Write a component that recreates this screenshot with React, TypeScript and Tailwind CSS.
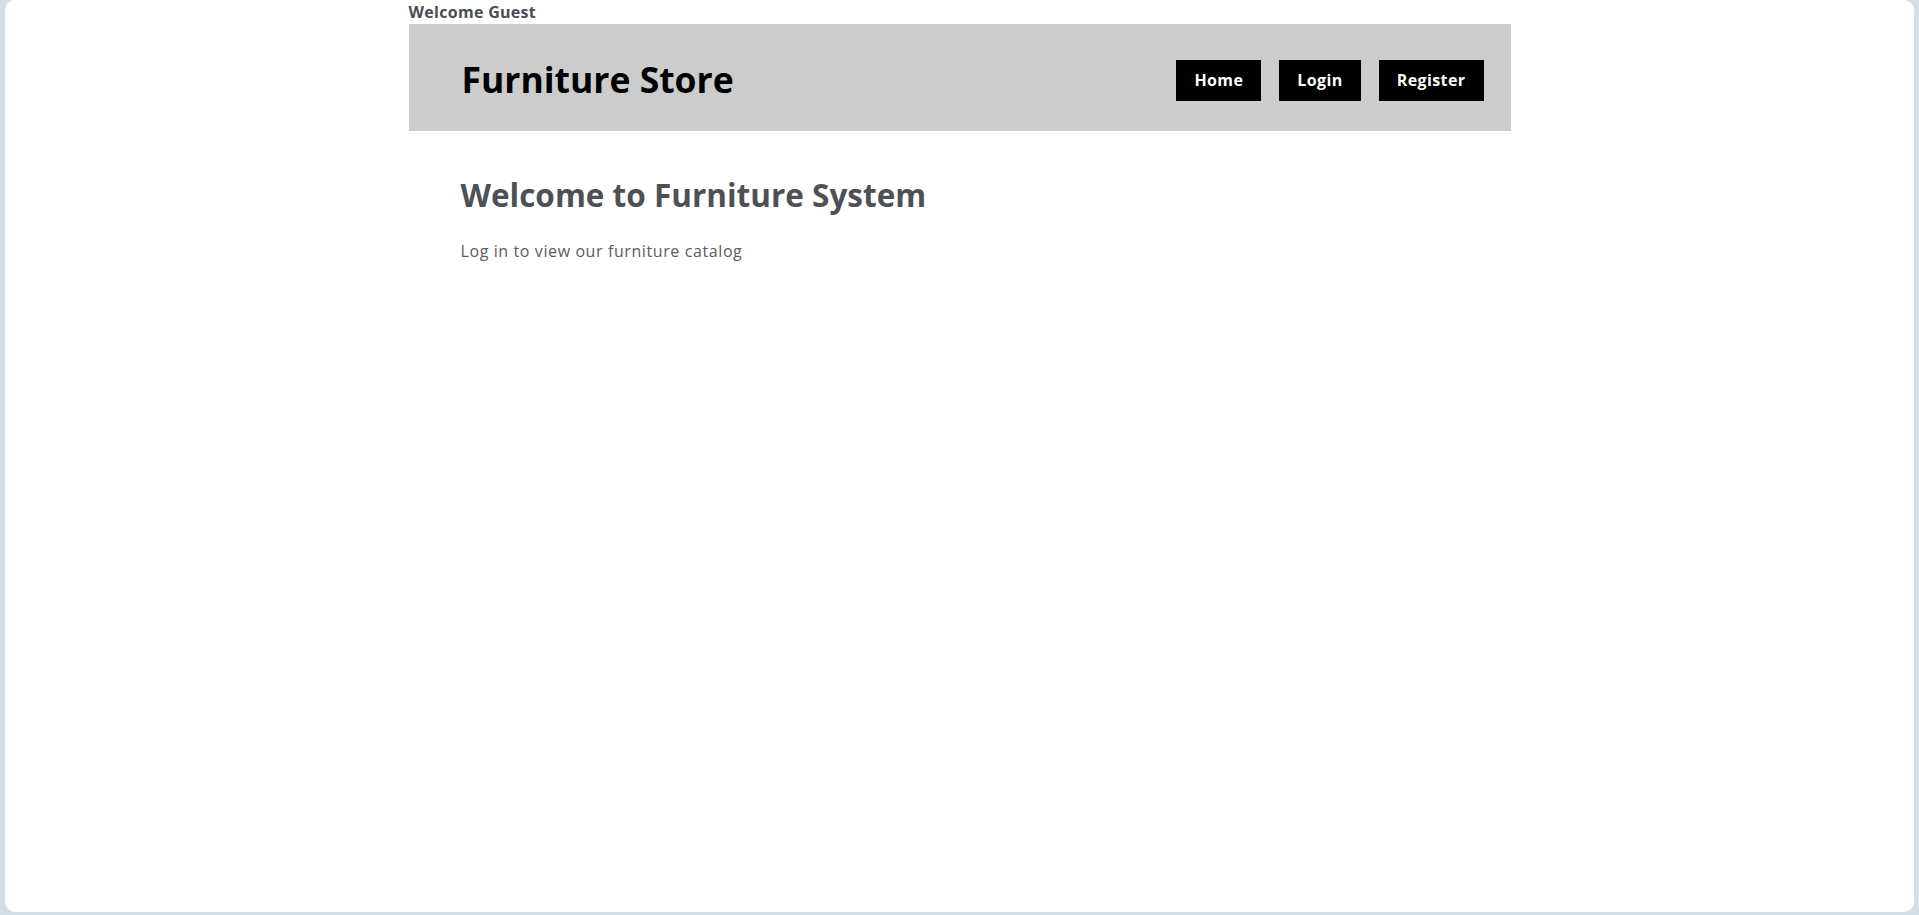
import React from "react"

const navLinks = ["Home", "Login", "Register"]

export default function App() {
  return (
    <div
      className="h-screen bg-[#d5dee7] px-[5px] pb-[3px]"
      style={{ fontFamily: '"Open Sans", "Noto Sans", sans-serif' }}
    >
      <div className="h-full rounded-[10px] bg-white">
        <div className="mx-auto w-[1102px]">
          {/* Guest greeting */}
          <div className="h-6 text-[16px] font-bold leading-6 tracking-[0.3px] text-[#4a4e54]">Welcome Guest</div>

          {/* Header bar */}
          <header className="flex h-[107px] items-center justify-between bg-[#cccccc] pl-[53px] pr-[27px] pt-[5px]">
            <h1 className="text-[35.5px] font-bold leading-none text-black">Furniture Store</h1>
            <nav className="flex gap-[18px]">
              {navLinks.map((link) => (
                <a
                  key={link}
                  href="#"
                  className="flex h-[41px] items-center bg-black px-[18px] text-[16px] font-bold tracking-[0.4px] text-white"
                >
                  {link}
                </a>
              ))}
            </nav>
          </header>

          {/* Main content */}
          <main className="pl-[52px] pt-[46px]">
            <h2 className="text-[31.5px] font-bold leading-[36px] text-[#4d5156]">Welcome to Furniture System</h2>
            <p className="mt-[26px] text-[16px] leading-6 tracking-[0.6px] text-[#585d62]">
              Log in to view our furniture catalog
            </p>
          </main>
        </div>
      </div>
    </div>
  )
}
